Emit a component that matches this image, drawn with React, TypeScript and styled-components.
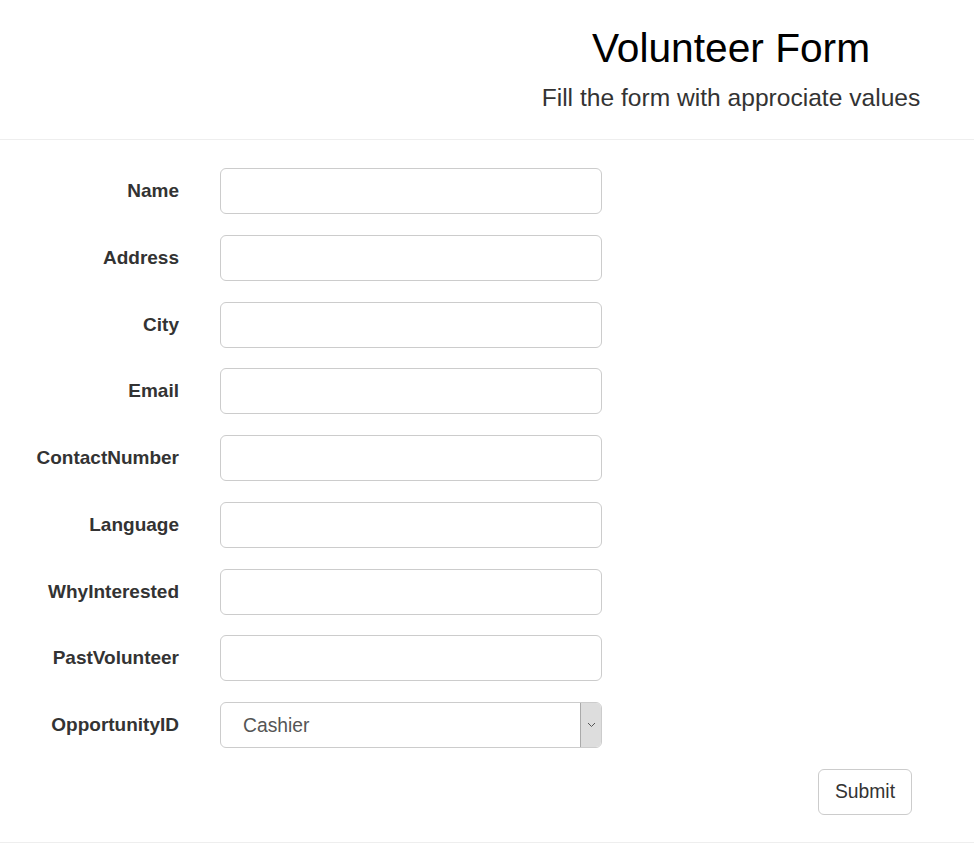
import React from "react";
import styled, { createGlobalStyle } from "styled-components";

const Global = createGlobalStyle`
  html, body { margin: 0; padding: 0; background: #fff; }
  body { font-family: "Liberation Sans", Arial, Helvetica, sans-serif; color: #333; }
  * { box-sizing: border-box; }
`;

const Page = styled.div`
  width: 974px;
  min-height: 868px;
  display: flex;
  flex-direction: column;
`;

const Header = styled.header`
  height: 140px;
  border-bottom: 1px solid #eee;
  display: flex;
  flex-direction: column;
  align-items: center;
  padding-left: 488px;
  padding-top: 22px;
`;

const Title = styled.h1`
  margin: 0;
  font-size: 40.7px;
  font-weight: 400;
  line-height: 52px;
  color: #000;
`;

const Subtitle = styled.p`
  margin: 9px 0 0;
  font-size: 24.6px;
  line-height: 30px;
  color: #333;
`;

const Form = styled.form`
  display: flex;
  flex-direction: column;
  padding-top: 28px;
  border-bottom: 1px solid #eee;
  padding-bottom: 27px;
`;

const Fields = styled.div`
  display: grid;
  grid-template-columns: 179px 382px;
  column-gap: 41px;
  row-gap: 20.75px;
  align-items: center;
`;

const Label = styled.label`
  text-align: right;
  font-weight: 700;
  font-size: 19px;
  color: #333;
  white-space: nowrap;
`;

const Input = styled.input`
  height: 46px;
  width: 100%;
  padding: 10px 16px;
  font-size: 19px;
  font-family: inherit;
  border: 1px solid #ccc;
  border-radius: 6px;
  background: #fff;
  color: #555;
  outline: none;
`;

const SelectWrap = styled.div`
  height: 46px;
  display: flex;
  border: 1px solid #ccc;
  border-radius: 6px;
  background: #fff;
  overflow: hidden;
`;

const Select = styled.select`
  flex: 1;
  appearance: none;
  -webkit-appearance: none;
  border: none;
  background: transparent;
  padding: 0 0 0 22px;
  font-size: 19.3px;
  font-family: inherit;
  color: #555;
  outline: none;
`;

const ArrowBox = styled.div`
  width: 21px;
  background: #ddd;
  border-left: 1px solid #aaa;
  display: flex;
  align-items: center;
  justify-content: center;
`;

const Actions = styled.div`
  display: flex;
  justify-content: flex-end;
  padding-right: 62px;
  margin-top: 21px;
`;

const Button = styled.button`
  height: 46px;
  padding: 10px 16px;
  font-size: 19.3px;
  font-family: inherit;
  color: #333;
  background: #fff;
  border: 1px solid #ccc;
  border-radius: 6px;
`;

const fields = [
  "Name",
  "Address",
  "City",
  "Email",
  "ContactNumber",
  "Language",
  "WhyInterested",
  "PastVolunteer",
];

export default function App() {
  return (
    <Page>
      <Global />
      <Header>
        <Title>Volunteer Form</Title>
        <Subtitle>Fill the form with approciate values</Subtitle>
      </Header>
      <Form onSubmit={(e) => e.preventDefault()}>
        <Fields>
          {fields.map((f) => (
            <React.Fragment key={f}>
              <Label htmlFor={f}>{f}</Label>
              <Input id={f} type="text" />
            </React.Fragment>
          ))}
          <Label htmlFor="OpportunityID">OpportunityID</Label>
          <SelectWrap>
            <Select id="OpportunityID" defaultValue="Cashier">
              <option>Cashier</option>
            </Select>
            <ArrowBox>
              <svg width="9" height="6" viewBox="0 0 9 6">
                <path d="M1 1 L4.5 4.5 L8 1" fill="none" stroke="#555" strokeWidth="1" />
              </svg>
            </ArrowBox>
          </SelectWrap>
        </Fields>
        <Actions>
          <Button type="submit">Submit</Button>
        </Actions>
      </Form>
    </Page>
  );
}
